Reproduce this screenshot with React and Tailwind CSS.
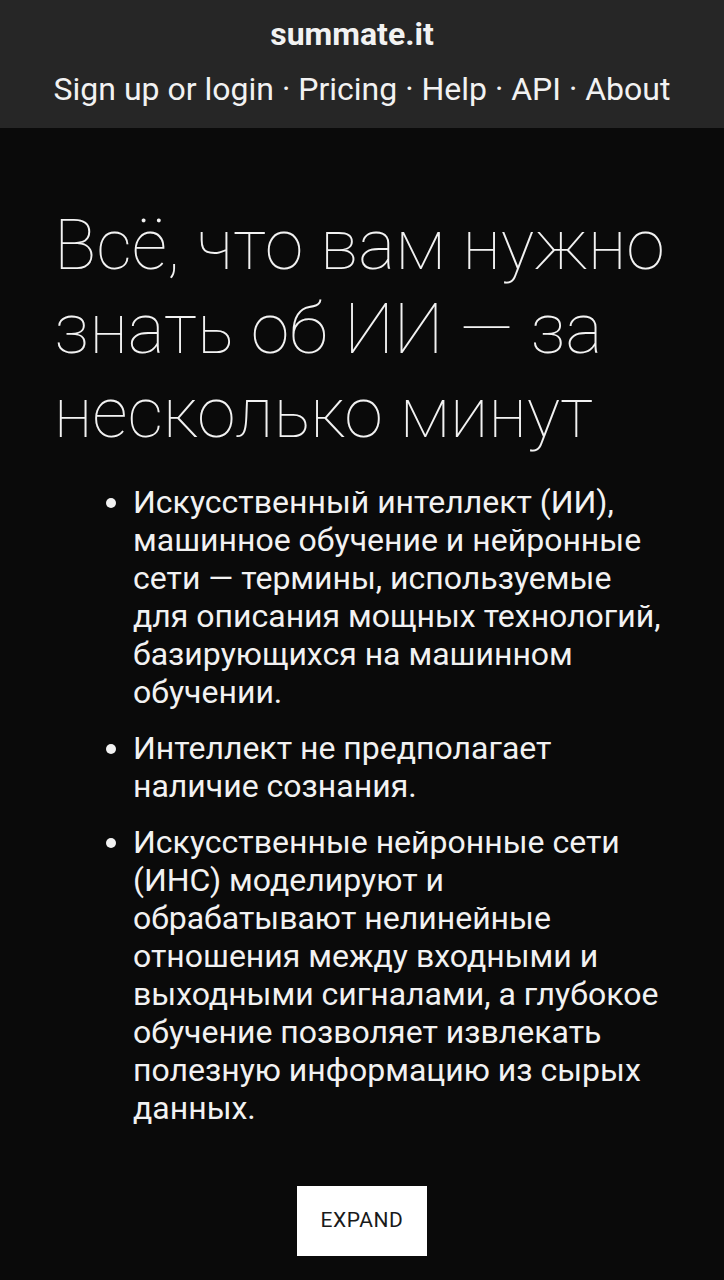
export default function App() {
  const font = { fontFamily: "Roboto, 'Noto Sans', sans-serif" };
  return (
    <div className="min-h-[1280px] bg-[#0a0a0a] text-white" style={font}>
      <header className="bg-[#262626] h-[128px] flex flex-col items-center pt-[15px]">
        <div className="text-[32px] font-bold leading-[38px] text-[#f2f2f2] mr-[20px]">summate.it</div>
        <nav className="mt-[17px] text-[32px] leading-[38px] text-[#f2f2f2] whitespace-nowrap">
          Sign up or login · Pricing · Help · API · About
        </nav>
      </header>
      <main className="px-[54px] pt-[75px]">
        <h1 className="text-[70px] font-thin leading-[84px] text-[#f2f2f2]">
          Всё, что вам нужно знать об ИИ — за несколько минут
        </h1>
        <ul className="mt-[28px] pl-[79px] list-disc text-[32px] leading-[38px] text-[#f2f2f2] flex flex-col gap-[18px]">
          <li>
            Искусственный интеллект (ИИ), машинное обучение и нейронные сети — термины, используемые для описания мощных технологий, базирующихся на машинном обучении.
          </li>
          <li>Интеллект не предполагает наличие сознания.</li>
          <li>
            Искусственные нейронные сети (ИНС) моделируют и обрабатывают нелинейные отношения между входными и выходными сигналами, а глубокое обучение позволяет извлекать полезную информацию из сырых данных.
          </li>
        </ul>
        <div className="flex justify-center mt-[59px]">
          <button className="bg-white text-[#1a1a1a] w-[130px] h-[70px] text-[21px] tracking-[0.6px]">EXPAND</button>
        </div>
      </main>
    </div>
  );
}
